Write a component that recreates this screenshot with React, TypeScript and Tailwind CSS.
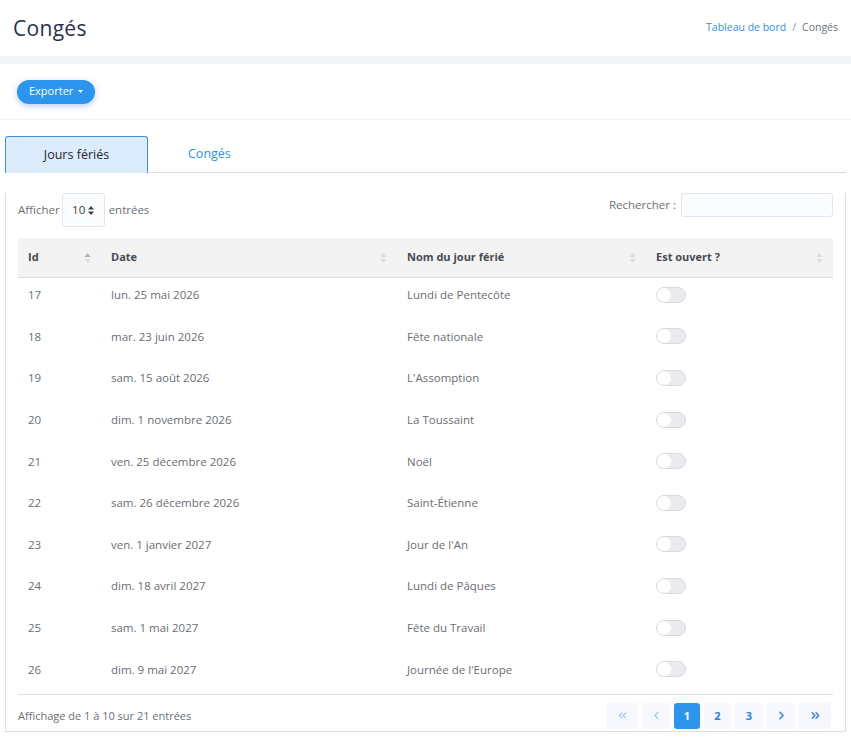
import React from "react";
import { ChevronLeft, ChevronRight, ChevronsLeft, ChevronsRight } from "lucide-react";

const rows = [
  ["17", "lun. 25 mai 2026", "Lundi de Pentecôte"],
  ["18", "mar. 23 juin 2026", "Fête nationale"],
  ["19", "sam. 15 août 2026", "L'Assomption"],
  ["20", "dim. 1 novembre 2026", "La Toussaint"],
  ["21", "ven. 25 décembre 2026", "Noël"],
  ["22", "sam. 26 décembre 2026", "Saint-Étienne"],
  ["23", "ven. 1 janvier 2027", "Jour de l'An"],
  ["24", "dim. 18 avril 2027", "Lundi de Pâques"],
  ["25", "sam. 1 mai 2027", "Fête du Travail"],
  ["26", "dim. 9 mai 2027", "Journée de l'Europe"],
];

function SortIcon({ active }: { active?: boolean }) {
  return (
    <svg width="7" height="12" viewBox="0 0 7 12" className="shrink-0">
      <path d="M3.5 1 L6.5 5 L0.5 5 Z" fill={active ? "#b5b5b5" : "#dcdcdc"} />
      <path d="M3.5 11 L6.5 7 L0.5 7 Z" fill="#dcdcdc" />
    </svg>
  );
}

function Toggle() {
  return (
    <div className="w-[30px] h-[16px] rounded-full bg-[#e9ebef] border border-[#d7dae0] relative">
      <div className="absolute left-[0px] top-[0px] w-[14px] h-[14px] rounded-full bg-white" />
    </div>
  );
}

export default function App() {
  const font = { fontFamily: "'Open Sans', 'Noto Sans', sans-serif" };
  return (
    <div className="w-[851px] h-[738px] bg-white overflow-hidden text-[#6c6f75]" style={font}>
      {/* Header */}
      <div className="h-[56px] flex items-center justify-between px-[13px]">
        <h1 className="text-[21px] font-medium text-[#2b3150] tracking-[0.3px] mt-[1px]">Congés</h1>
        <div className="flex items-center text-[10.5px]">
          <span className="text-[#2e90ec] font-medium">Tableau de bord</span>
          <span className="mx-[6px] text-[#8a8f98]">/</span>
          <span className="text-[#6c717a]">Congés</span>
        </div>
      </div>
      <div className="h-[8px] bg-[#f3f4f6]" />
      {/* Toolbar */}
      <div className="h-[56px] flex items-center px-[17px] border-b border-[#f0f1f3]">
        <button className="h-[24px] px-[12px] rounded-full bg-[#2c95ee] text-white text-[11px] font-medium flex items-center gap-[5px] shadow-[0_2px_6px_rgba(60,110,240,0.35)]">
          Exporter
          <svg width="5" height="3" viewBox="0 0 5 3"><path d="M0 0 L5 0 L2.5 3 Z" fill="white" /></svg>
        </button>
      </div>
      {/* Tabs */}
      <div className="px-[5px] pt-[16px]">
        <div className="flex h-[37px] items-end">
          <div className="w-[143px] h-[37px] bg-[#dcecfc] border border-b-0 border-[#3d8fe0] rounded-t-[3px] flex items-center justify-center text-[12.5px] font-medium text-[#1f2430]">
            Jours fériés
          </div>
          <div className="flex-1 h-[37px] border-b border-[#dcdde0] flex items-center">
            <span className="ml-[40px] text-[12.5px] font-medium text-[#2e90ec]">Congés</span>
          </div>
        </div>
        <div className="border border-t-0 border-[#dcdde0] px-[12px]">
          <div className="flex items-start justify-between mt-[20px] h-[35px]">
            <div className="flex items-center text-[11.5px]">
              <span>Afficher</span>
              <div className="ml-[2px] w-[43px] h-[34px] border border-[#e3e4f2] rounded-[3px] bg-[#fbfcfe] flex items-center justify-center gap-[3px] text-[#3b3f46]">
                10
                <svg width="6" height="9" viewBox="0 0 6 9"><path d="M3 0 L6 3.5 L0 3.5 Z M3 9 L6 5.5 L0 5.5 Z" fill="#3b3f46" /></svg>
              </div>
              <span className="ml-[4px]">entrées</span>
            </div>
            <div className="flex items-center text-[11.5px]">
              <span className="mr-[5px]">Rechercher :</span>
              <div className="w-[152px] h-[24px] border border-[#e3e4f2] rounded-[3px] bg-[#fbfcfe]" />
            </div>
          </div>
          {/* Table */}
          <div className="mt-[10px]">
            <div className="flex h-[40px] bg-[#f3f3f3] border-b border-[#dddee0] items-center text-[11px] font-bold text-[#484b52]">
              <div className="w-[83px] pl-[10px] pr-[10px] flex items-center justify-between"><span>Id</span><SortIcon active /></div>
              <div className="w-[296px] pl-[10px] pr-[10px] flex items-center justify-between"><span>Date</span><SortIcon /></div>
              <div className="w-[249px] pl-[10px] pr-[10px] flex items-center justify-between"><span>Nom du jour férié</span><SortIcon /></div>
              <div className="flex-1 pl-[10px] pr-[10px] flex items-center justify-between"><span>Est ouvert ?</span><SortIcon /></div>
            </div>
            {rows.map((r) => (
              <div key={r[0]} className="flex h-[41.6px] items-center pb-[8px] text-[11.5px] text-[#6a6d74]">
                <div className="w-[83px] pl-[10px]">{r[0]}</div>
                <div className="w-[296px] pl-[10px]">{r[1]}</div>
                <div className="w-[249px] pl-[10px]">{r[2]}</div>
                <div className="flex-1 pl-[10px]"><Toggle /></div>
              </div>
            ))}
            <div className="border-t border-[#dddee0] flex items-center justify-between h-[37px] pt-[6px]">
              <span className="text-[11px]">Affichage de 1 à 10 sur 21 entrées</span>
              <div className="flex items-center gap-[4px] mr-[2px] text-[11px] font-bold">
                <div className="w-[31px] h-[26px] rounded-[3px] bg-[#f6f8fd] flex items-center justify-center text-[#9cc6f5]"><ChevronsLeft size={13} strokeWidth={2} /></div>
                <div className="w-[28px] h-[26px] rounded-[3px] bg-[#f6f8fd] flex items-center justify-center text-[#9cc6f5]"><ChevronLeft size={13} strokeWidth={2} /></div>
                <div className="w-[26px] h-[26px] rounded-[3px] bg-[#2c95ee] flex items-center justify-center text-white">1</div>
                <div className="w-[27px] h-[26px] rounded-[3px] bg-[#f6f8fd] flex items-center justify-center text-[#2e7fe0]">2</div>
                <div className="w-[28px] h-[26px] rounded-[3px] bg-[#f6f8fd] flex items-center justify-center text-[#2e7fe0]">3</div>
                <div className="w-[28px] h-[26px] rounded-[3px] bg-[#f6f8fd] flex items-center justify-center text-[#2e7fe0]"><ChevronRight size={13} strokeWidth={2.5} /></div>
                <div className="w-[32px] h-[26px] rounded-[3px] bg-[#f6f8fd] flex items-center justify-center text-[#2e7fe0]"><ChevronsRight size={13} strokeWidth={2.5} /></div>
              </div>
            </div>
          </div>
        </div>
      </div>
    </div>
  );
}
